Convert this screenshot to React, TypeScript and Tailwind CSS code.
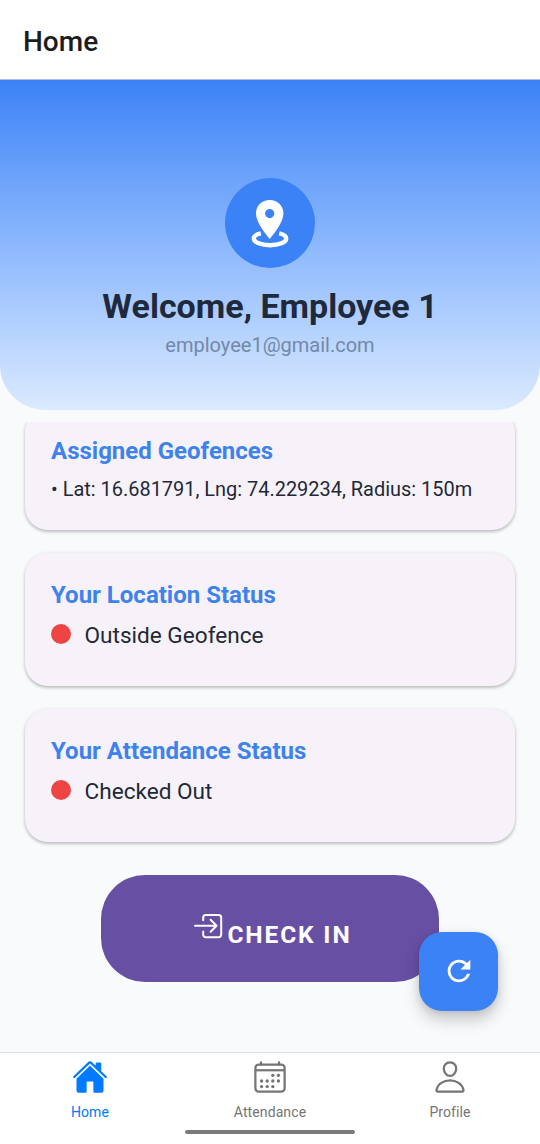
import type { ReactNode } from "react";
import { IoHome, IoCalendarOutline, IoPersonOutline } from "react-icons/io5";
import { MdRefresh } from "react-icons/md";

const CARD_SHADOW = "shadow-[0_1px_4px_rgba(0,0,0,0.15),0_2px_3px_rgba(0,0,0,0.15)]";

function PinIcon() {
  return (
    <svg width="38" height="48" viewBox="0 0 38 48" fill="none">
      <path
        d="M9.800 33.400C5.200 34.400 2.800 36.300 2.800 38.500c0 3.900 7.200 6.700 16.200 6.700s16.200-2.800 16.200-6.700c0-2.200-2.400-4.100-7-5.100"
        stroke="#fff"
        strokeWidth="4.400"
      />
      <path
        fill="#fff"
        fillRule="evenodd"
        d="M18.700 0C11 0 5 5.900 5 13.300 5 21.500 12.500 31.500 18.700 39c6.200-7.500 13.700-17.500 13.700-25.700C32.400 5.900 26.400 0 18.700 0zm0 18.200a4.600 4.600 0 1 1 0-9.200 4.600 4.600 0 0 1 0 9.200z"
      />
    </svg>
  );
}

function EnterIcon() {
  return (
    <svg width="29" height="26" viewBox="0 0 29 26" fill="none" stroke="#fff" strokeWidth="2">
      <path d="M9.200 7.200V4.400A2.500 2.500 0 0 1 11.700 1.900h13a2.500 2.500 0 0 1 2.500 2.500v17.400a2.500 2.500 0 0 1-2.500 2.500H11.700a2.500 2.500 0 0 1-2.500-2.500v-3.300" strokeLinecap="round" />
      <path d="M1 12.800h20.500M16.600 6.800l6 6-6 6" strokeLinecap="round" strokeLinejoin="round" />
    </svg>
  );
}

function Card({ title, children }: { title: string; children: ReactNode }) {
  return (
    <section className={`h-[133px] shrink-0 rounded-[23px] bg-[#f7f2f9] px-[26px] pt-[26px] ${CARD_SHADOW}`}>
      <h2 className="text-[24px] leading-[32px] font-bold text-[#3d82ed]">{title}</h2>
      {children}
    </section>
  );
}

function Status({ label }: { label: string }) {
  return (
    <div className="mt-[9px] flex items-center gap-[13.500px]">
      <span className="-mt-[1.500px] size-5 rounded-full bg-[#ef4444]" />
      <span className="text-[22.600px] leading-[31px] text-[#1f2937]">{label}</span>
    </div>
  );
}

function Tab({ label, active, children }: { label: string; active?: boolean; children: ReactNode }) {
  return (
    <div className={`flex w-[180px] flex-col items-center pt-[6px] text-[14px] leading-[18px] ${active ? "text-[#007aff]" : "text-[#757575]"}`}>
      <div className="flex h-9 items-center">{children}</div>
      <span className="mt-[8px] tracking-[0.1px]">{label}</span>
    </div>
  );
}

export default function App() {
  return (
    <div className="relative flex h-[1144px] w-[540px] flex-col overflow-hidden bg-[#f9fafc] font-['Roboto',sans-serif]">
      <header className="flex h-20 shrink-0 items-center border-b border-[#b0bfd4] bg-white pt-[4px] pl-[23px]">
        <h1 className="text-[28px] leading-[36px] font-medium text-[#1c1c1e]">Home</h1>
      </header>

      <div className="flex h-[330px] shrink-0 flex-col items-center rounded-b-[45px] bg-linear-to-b from-[#3b82f6] to-[#dbeafe] pt-[98px]">
        <div className="flex size-[90px] items-center justify-center rounded-full bg-[#3b82f6] pt-[1px]">
          <PinIcon />
        </div>
        <p className="mt-[16px] text-[34px] leading-[44px] font-bold text-[#1e293b]">Welcome, Employee 1</p>
        <p className="mt-[4px] text-[20px] leading-[26px] text-[#7488a8]">employee1@gmail.com</p>
      </div>

      <main className="mt-3 flex h-[630px] shrink-0 flex-col overflow-hidden px-[25px]">
        <div className="-mt-[13.500px] flex flex-col gap-[23px]">
          <section className={`h-[121px] rounded-[23px] bg-[#f7f2f9] px-[26px] pt-[26px] ${CARD_SHADOW}`}>
            <h2 className="text-[24px] leading-[32px] font-bold text-[#3d82ed]">Assigned Geofences</h2>
            <p className="mt-[9px] text-[19.950px] leading-[26px] whitespace-nowrap text-[#1f2937]">
              • Lat: 16.681791, Lng: 74.229234, Radius: 150m
            </p>
          </section>
          <Card title="Your Location Status">
            <Status label="Outside Geofence" />
          </Card>
          <Card title="Your Attendance Status">
            <Status label="Checked Out" />
          </Card>
        </div>
        <button className="mt-[33.500px] flex h-[107px] w-[338px] shrink-0 justify-center self-center rounded-[44px] bg-[#6750a4] pt-[38px]">
          <span className="flex gap-[4px] pl-[6px]">
            <EnterIcon />
            <span className="mt-[6px] text-[24.500px] leading-[32px] font-bold tracking-[1.850px] text-white">CHECK IN</span>
          </span>
        </button>
      </main>

      <nav className="flex h-[92px] shrink-0 border-t border-[#dedfe1] bg-white">
        <Tab label="Home" active>
          <IoHome size={36} />
        </Tab>
        <Tab label="Attendance">
          <IoCalendarOutline size={36} />
        </Tab>
        <Tab label="Profile">
          <IoPersonOutline size={36} />
        </Tab>
      </nav>

      <button className="absolute top-[932px] left-[419px] flex size-[79px] items-center justify-center rounded-[23px] bg-[#3b82f6] pb-[1px] text-white shadow-[0_9px_16px_rgba(0,0,0,0.2),0_1px_6px_rgba(0,0,0,0.1)]">
        <MdRefresh size={34} />
      </button>
      <div className="absolute top-[1130px] left-[185px] h-[4px] w-[170px] rounded-full bg-[#7b7b7b]" />
    </div>
  );
}
